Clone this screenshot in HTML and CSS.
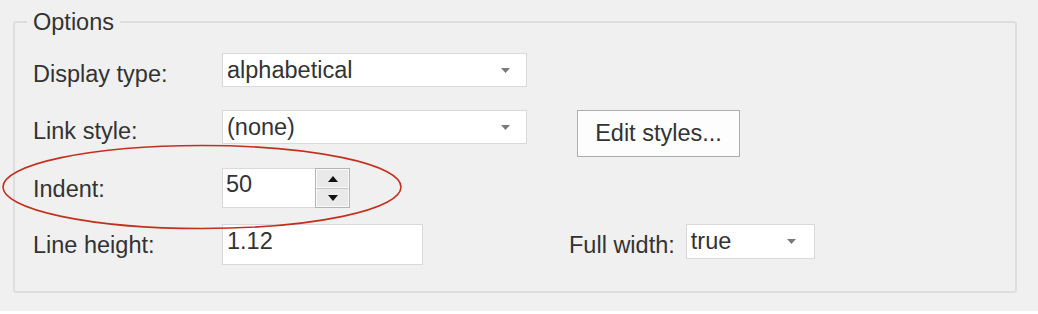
FILE: index.html
```html
<!DOCTYPE html>
<html lang="en">
<head>
  <meta charset="utf-8">
  <title>Options</title>
  <link rel="stylesheet" href="styles.css">
</head>
<body>
  <div class="page">
    <fieldset class="options">
      <legend>Options</legend>

      <div class="row">
        <label class="label">Display type:</label>
        <div class="select wide">
          <span>alphabetical</span>
          <svg class="arrow" width="9" height="5" viewBox="0 0 9 5"><path d="M0 0h9L4.5 5z"/></svg>
        </div>
      </div>

      <div class="row">
        <label class="label">Link style:</label>
        <div class="select wide">
          <span>(none)</span>
          <svg class="arrow" width="9" height="5" viewBox="0 0 9 5"><path d="M0 0h9L4.5 5z"/></svg>
        </div>
        <button class="btn">Edit styles...</button>
      </div>

      <div class="row">
        <label class="label">Indent:</label>
        <div class="spin">
          <span class="spin-value">50</span>
          <div class="spin-buttons">
            <span class="spin-btn"><svg width="10" height="6" viewBox="0 0 10 6"><path d="M0 6h10L5 0z"/></svg></span>
            <span class="spin-btn"><svg width="10" height="6" viewBox="0 0 10 6"><path d="M0 0h10L5 6z"/></svg></span>
          </div>
        </div>
      </div>

      <div class="row">
        <label class="label">Line height:</label>
        <div class="text-input">1.12</div>
        <label class="label side">Full width:</label>
        <div class="select narrow">
          <span>true</span>
          <svg class="arrow" width="9" height="5" viewBox="0 0 9 5"><path d="M0 0h9L4.5 5z"/></svg>
        </div>
      </div>
    </fieldset>

    <svg class="mark" width="1038" height="314" viewBox="0 0 1038 314">
      <ellipse cx="202" cy="187" rx="199" ry="41.5" fill="none" stroke="#c3311d" stroke-width="1.6"/>
    </svg>
  </div>
</body>
</html>
```

FILE: styles.css
```css
html {
  background: #fff;
}
body {
  margin: 0;
  font: 23.5px/27px 'Liberation Sans', Arial, sans-serif;
  color: #333;
}
.page {
  position: relative;
  box-sizing: border-box;
  height: 311px;
  padding: 8px 21px 0 13px;
  background: #f0f0f0;
}

fieldset.options {
  margin: 0;
  padding: 17px 18px 26px 18px;
  border: 2px solid #dedede;
  border-radius: 3px;
  display: grid;
  grid-template-rows: 57px 58px 56px 41px;
}
legend {
  margin-left: -6px;
  padding: 0 6px;
  line-height: 28px;
}

.row {
  display: flex;
  align-items: flex-start;
}
.label {
  width: 189px;
  flex: none;
  margin-top: 8px;
}
.label.side {
  width: auto;
  margin-left: 146px;
  margin-right: 11px;
}

.select, .text-input, .spin {
  box-sizing: border-box;
  background: #fff;
  border: 1px solid #d9d9d9;
}
.select {
  display: flex;
  align-items: center;
  justify-content: space-between;
  height: 34px;
  padding: 0 16px 0 4px;
}
.select.wide   { width: 305px; }
.select.narrow { width: 129px; height: 35px; padding-right: 18px; }
.arrow { fill: #7a7a7a; }

.btn {
  box-sizing: border-box;
  width: 163px;
  height: 47px;
  margin-left: 50px;
  padding: 0;
  font: inherit;
  color: #333;
  background: #fdfdfd;
  border: 1px solid #adadad;
}

.spin {
  display: flex;
  width: 128px;
  height: 40px;
}
.spin-value {
  flex: 1;
  padding: 2px 0 0 3px;
}
.spin-buttons {
  display: flex;
  flex-direction: column;
  width: 35px;
  margin: -1px -1px -1px 0;
  border: 1px solid #b4b4b4;
  box-sizing: border-box;
}
.spin-btn {
  flex: 1;
  display: flex;
  align-items: center;
  justify-content: center;
  background: #e9e9e9;
  border: 1px solid #fafafa;
}
.spin-btn + .spin-btn {
  border-top-color: #c6c6c6;
}
.spin-btn svg { fill: #111; }

.text-input {
  width: 201px;
  height: 41px;
  padding: 3px 0 0 4px;
}

.mark {
  position: absolute;
  left: 0;
  top: 0;
  pointer-events: none;
}
```
